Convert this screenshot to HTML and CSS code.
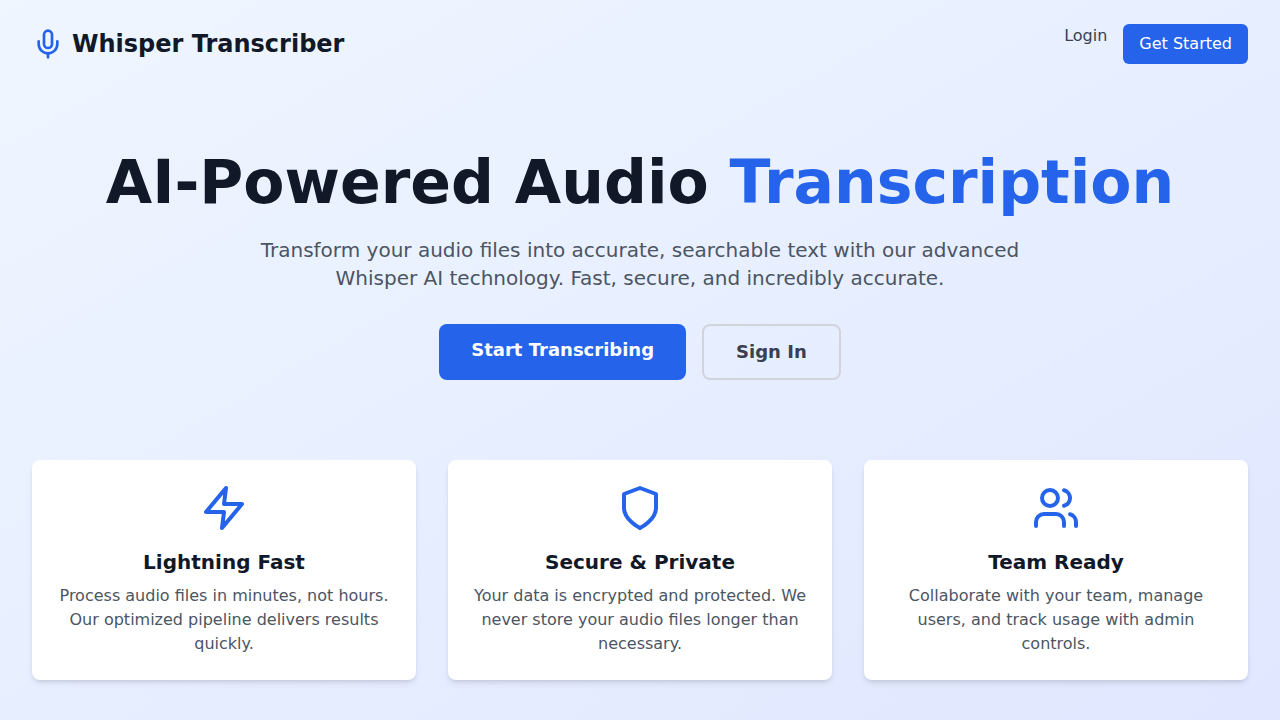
FILE: index.html
```html
<!DOCTYPE html>
<html lang="en">
<head>
<meta charset="utf-8">
<meta name="viewport" content="width=device-width, initial-scale=1">
<title>Whisper Transcriber</title>
<link rel="stylesheet" href="styles.css">
</head>
<body>
<div class="container">
  <header class="header">
    <div class="brand">
      <svg class="icon brand-icon" viewBox="0 0 24 24" aria-hidden="true"><path d="M12 2a3 3 0 0 0-3 3v7a3 3 0 0 0 6 0V5a3 3 0 0 0-3-3Z"/><path d="M19 10v2a7 7 0 0 1-14 0v-2"/><path d="M12 19v3"/></svg>
      <span class="brand-name">Whisper Transcriber</span>
    </div>
    <nav class="nav">
      <a class="nav-link" href="#login">Login</a>
      <a class="nav-button" href="#register">Get Started</a>
    </nav>
  </header>
  <main>
    <section class="hero">
      <h1 class="hero-title">AI-Powered Audio <span class="accent">Transcription</span></h1>
      <p class="hero-text">Transform your audio files into accurate, searchable text with our advanced Whisper AI technology. Fast, secure, and incredibly accurate.</p>
      <div class="actions">
        <a class="action action-primary" href="#register">Start Transcribing</a>
        <a class="action action-outline" href="#login">Sign In</a>
      </div>
    </section>
    <section class="features">
      <article class="card">
        <svg class="icon card-icon" viewBox="0 0 24 24" aria-hidden="true"><path d="M13 2 3 14h9l-1 8 10-12h-9l1-8z"/></svg>
        <h2 class="card-title">Lightning Fast</h2>
        <p class="card-text">Process audio files in minutes, not hours. Our optimized pipeline delivers results quickly.</p>
      </article>
      <article class="card">
        <svg class="icon card-icon" viewBox="0 0 24 24" aria-hidden="true"><path d="M12 22s8-4 8-10V5l-8-3-8 3v7c0 6 8 10 8 10"/></svg>
        <h2 class="card-title">Secure &amp; Private</h2>
        <p class="card-text">Your data is encrypted and protected. We never store your audio files longer than necessary.</p>
      </article>
      <article class="card">
        <svg class="icon card-icon" viewBox="0 0 24 24" aria-hidden="true"><path d="M16 21v-2a4 4 0 0 0-4-4H6a4 4 0 0 0-4 4v2"/><circle cx="9" cy="7" r="4"/><path d="M22 21v-2a4 4 0 0 0-3-3.87"/><path d="M16 3.13a4 4 0 0 1 0 7.75"/></svg>
        <h2 class="card-title">Team Ready</h2>
        <p class="card-text">Collaborate with your team, manage users, and track usage with admin controls.</p>
      </article>
    </section>
  </main>
</div>
</body>
</html>
```
FILE: styles.css
```css
* {
  box-sizing: border-box;
  margin: 0;
}

body {
  min-height: 100vh;
  background: linear-gradient(to bottom right, #eff6ff, #e0e7ff);
  color: #111827;
  font-family: "DejaVu Sans", sans-serif;
  font-size: 16px;
  line-height: 24px;
}

a {
  text-decoration: none;
}

.container {
  max-width: 1280px;
  margin: 0 auto;
  padding: 0 32px;
}

.header {
  display: flex;
  align-items: center;
  justify-content: space-between;
  padding: 24px 0;
}

.brand {
  display: flex;
  align-items: center;
  gap: 8px;
}

.brand-name {
  font-size: 24px;
  font-weight: 700;
  line-height: 32px;
}

.icon {
  display: block;
  fill: none;
  stroke: #2563eb;
  stroke-width: 2;
  stroke-linecap: round;
  stroke-linejoin: round;
}

.brand-icon {
  width: 32px;
  height: 32px;
}

.nav {
  display: flex;
  gap: 16px;
}

.nav-link {
  color: #374151;
}

.nav-button {
  padding: 8px 16px;
  border-radius: 6px;
  background: #2563eb;
  color: #fff;
}

.hero {
  padding: 64px 0 80px;
  text-align: center;
}

.hero-title {
  margin-bottom: 24px;
  font-size: 60px;
  font-weight: 700;
  line-height: 60px;
}

.accent {
  color: #2563eb;
}

.hero-text {
  max-width: 768px;
  margin: 0 auto 32px;
  color: #4b5563;
  font-size: 20px;
  line-height: 28px;
}

.actions {
  display: flex;
  flex-wrap: wrap;
  justify-content: center;
  gap: 16px;
}

.action {
  padding: 12px 32px;
  border-radius: 8px;
  font-size: 18px;
  font-weight: 600;
  line-height: 28px;
}

.action-primary {
  background: #2563eb;
  color: #fff;
}

.action-outline {
  border: 2px solid #d1d5db;
  color: #374151;
}

.features {
  display: grid;
  grid-template-columns: repeat(auto-fit, minmax(280px, 1fr));
  gap: 32px;
  padding-bottom: 40px;
}

.card {
  padding: 24px;
  border-radius: 8px;
  background: #fff;
  box-shadow: 0 4px 6px -1px rgb(0 0 0 / 0.1), 0 2px 4px -2px rgb(0 0 0 / 0.1);
  text-align: center;
}

.card-icon {
  width: 48px;
  height: 48px;
  margin: 0 auto 16px;
}

.card-title {
  margin-bottom: 8px;
  font-size: 20px;
  font-weight: 600;
  line-height: 28px;
}

.card-text {
  color: #4b5563;
}
```
